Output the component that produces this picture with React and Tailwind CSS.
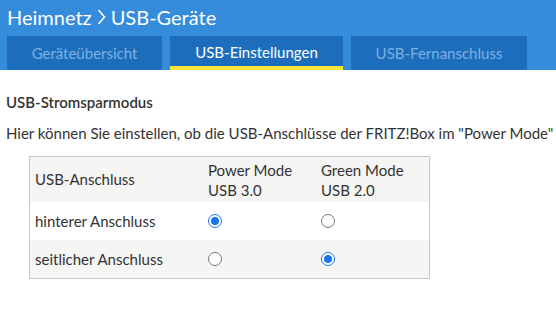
export default function App() {
  const font = { fontFamily: "Lato, 'Noto Sans', sans-serif" };
  const Radio = ({ checked }) =>
    checked ? (
      <span className="inline-flex h-[14px] w-[14px] items-center justify-center rounded-full border-[1.5px] border-[#1e74f0] bg-white">
        <span className="h-[8px] w-[8px] rounded-full bg-[#1e74f0]" />
      </span>
    ) : (
      <span className="inline-block h-[14px] w-[14px] rounded-full border border-[#767676] bg-white" />
    );
  return (
    <div className="h-[327px] w-[556px] overflow-hidden bg-white text-[#333]" style={font}>
      <div className="bg-[#348cdb] pl-[7px]">
        <div className="flex h-[36px] items-center pb-[3px] text-[20px] text-white">
          Heimnetz
          <svg className="mx-[5px]" width="9" height="16" viewBox="0 0 9 16" fill="none" stroke="white" strokeWidth="1.6">
            <path d="M1.5 1 L7.5 8 L1.5 15" />
          </svg>
          USB-Geräte
        </div>
        <div className="flex h-[34px] gap-[8px]">
          <div className="flex w-[155px] items-center justify-center bg-[#1c6ebd] text-[15px] text-[#7fb0e0]">Geräteübersicht</div>
          <div className="flex w-[173px] flex-col bg-[#1c6ebd] text-[15px] text-white">
            <div className="flex flex-1 items-center justify-center pt-[2px]">USB-Einstellungen</div>
            <div className="h-[4px] bg-[#f5e53a]" />
          </div>
          <div className="flex w-[176px] items-center justify-center bg-[#1c6ebd] text-[15px] text-[#7fb0e0]">USB-Fernanschluss</div>
        </div>
      </div>
      <div className="pl-[6px] pt-[21px]">
        <div className="text-[15px] font-semibold text-[#333]">USB-Stromsparmodus</div>
        <div className="mt-[8px] whitespace-nowrap text-[15px] text-[#333]">
          Hier können Sie einstellen, ob die USB-Anschlüsse der FRITZ!Box im "Power Mode"
        </div>
        <div className="ml-[23px] mt-[12px] w-[401px] border border-[#c8c8c4] text-[15px]">
          <div className="flex h-[45px] items-center bg-[#f5f5f3]">
            <div className="w-[178px] pl-[5px]">USB-Anschluss</div>
            <div className="w-[113px] leading-[20px]">Power Mode<br />USB 3.0</div>
            <div className="leading-[20px]">Green Mode<br />USB 2.0</div>
          </div>
          <div className="flex h-[38px] items-center bg-white">
            <div className="w-[178px] pl-[5px]">hinterer Anschluss</div>
            <div className="flex w-[113px]"><Radio checked /></div>
            <div className="flex"><Radio /></div>
          </div>
          <div className="flex h-[38px] items-center bg-[#f5f5f3]">
            <div className="w-[178px] pl-[5px]">seitlicher Anschluss</div>
            <div className="flex w-[113px]"><Radio /></div>
            <div className="flex"><Radio checked /></div>
          </div>
        </div>
      </div>
    </div>
  );
}
